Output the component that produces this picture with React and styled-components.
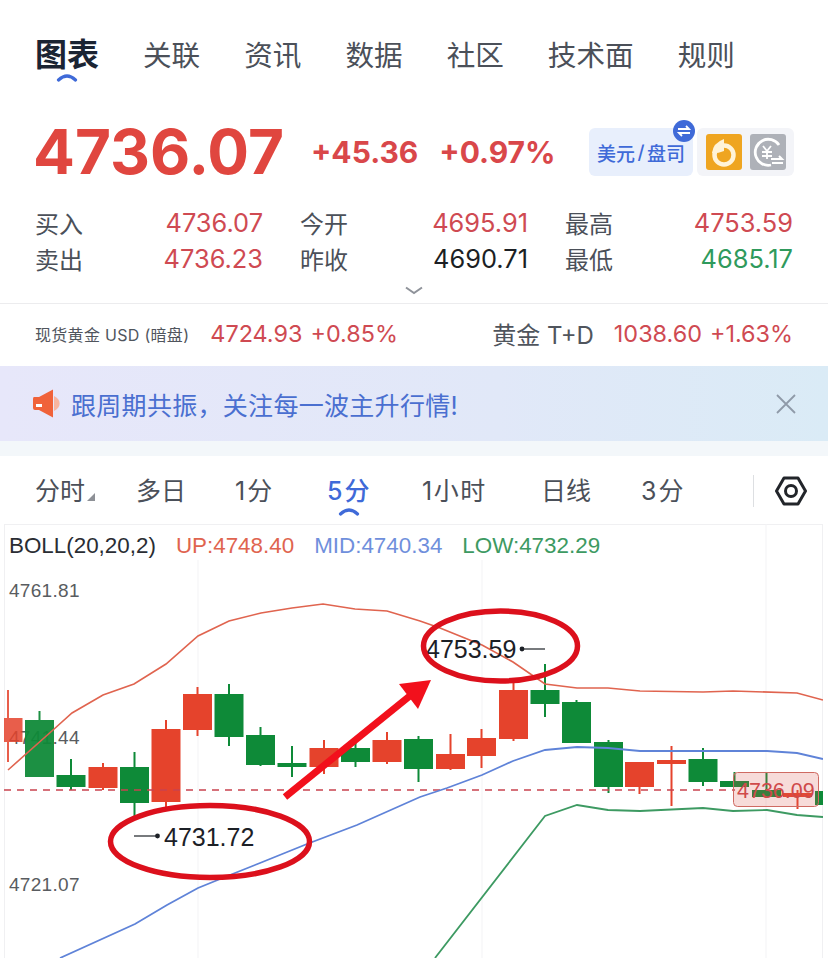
import styled, { createGlobalStyle } from "styled-components";

const BASE = `Inter, "Noto Sans CJK SC", sans-serif`;
const LIB = `"Liberation Sans", "Noto Sans CJK SC", sans-serif`;

const GlobalStyle = createGlobalStyle`
  html, body {
    margin: 0;
    padding: 0;
    background: #fff;
    font-family: ${BASE};
  }
`;

const Page = styled.div`
  width: 828px;
  height: 958px;
  overflow: hidden;
  background: #fff;
`;

const Tabs = styled.div`
  display: flex;
  align-items: baseline;
  gap: 44px;
  height: 49px;
  padding: 35px 0 0 35px;
`;
const Tab = styled.div`
  position: relative;
  font-size: ${(p) => (p.$active ? "32px" : "28.6px")};
  font-weight: ${(p) => (p.$active ? 700 : 400)};
  color: ${(p) => (p.$active ? "#1b2433" : "#4b5059")};
  line-height: 40px;
`;
const Smile = styled.svg`
  position: absolute;
  left: ${(p) => p.$left}px;
  bottom: ${(p) => p.$bottom}px;
`;

const PriceRow = styled.div`
  display: flex;
  align-items: center;
  height: 58px;
  margin-top: 39px;
  padding: 0 34px 0 33px;
`;
const BigPrice = styled.div`
  width: 278px;
  font-size: 62px;
  font-weight: 700;
  color: #e0463f;
  line-height: 58px;
`;
const Change = styled.div`
  font-size: 30px;
  font-weight: 700;
  color: #d9474a;
  margin-right: ${(p) => p.$gap}px;
`;
const CurrencyBtn = styled.div`
  position: relative;
  display: flex;
  align-items: center;
  justify-content: center;
  flex: none;
  width: 104px;
  height: 48px;
  margin-left: auto;
  margin-right: 4px;
  background: #e8effc;
  border-radius: 6px;
  color: #3f6ad8;
  font-size: 19px;
  font-weight: 500;
`;
const Slash = styled.span`
  margin: 0 2.5px;
`;
const SwapBadge = styled.svg`
  position: absolute;
  top: -8px;
  right: -2px;
`;
const ToolBox = styled.div`
  display: flex;
  align-items: center;
  justify-content: center;
  flex: none;
  gap: 8px;
  width: 97px;
  height: 48px;
  background: #f3f4f8;
  border-radius: 6px;
`;
const ToolIcon = styled.div`
  width: 36px;
  height: 36px;
  border-radius: 3px;
  background: ${(p) => p.$bg};
  svg {
    display: block;
  }
`;

const Stats = styled.div`
  display: grid;
  grid-template-columns: repeat(3, 228px);
  column-gap: 37px;
  margin-top: 23px;
  padding-left: 35px;
`;
const Stat = styled.div`
  display: flex;
  justify-content: space-between;
  align-items: center;
  height: 36px;
  font-size: 24px;
  color: #4b5059;
`;
const StatValue = styled.span`
  font-size: 25.4px;
  color: ${(p) => p.$color};
`;
const More = styled.div`
  display: flex;
  justify-content: center;
  height: 28px;
  padding-top: 10px;
  box-sizing: border-box;
  border-bottom: 1px solid #ececee;
`;

const Ticker = styled.div`
  display: flex;
  align-items: center;
  box-sizing: border-box;
  height: 62px;
  padding: 0 35px 3px;
`;
const TickerName = styled.span`
  font-size: ${(p) => p.$size}px;
  letter-spacing: ${(p) => p.$track || 0}px;
  color: #50555d;
  margin-right: ${(p) => p.$gap}px;
`;
const TickerNum = styled.span`
  font-size: 23.4px;
  color: #cf4a52;
  margin-right: ${(p) => p.$gap || 0}px;
`;
const Spacer = styled.div`
  flex: 1;
`;

const Banner = styled.div`
  display: flex;
  align-items: center;
  height: 75px;
  padding: 0 32px 0 33px;
  background: linear-gradient(90deg, #e7e7fa 0%, #e1e8f8 60%, #daebf6 100%);
`;
const BannerText = styled.div`
  flex: 1;
  margin-left: 9px;
  font-size: 25px;
  letter-spacing: 0.3px;
  color: #4a6fd0;
`;
const BannerFoot = styled.div`
  height: 15px;
  background: #f3f7fa;
`;

const Periods = styled.div`
  display: flex;
  align-items: center;
  box-sizing: border-box;
  height: 68px;
  padding: 2px 0 0 35px;
`;
const Period = styled.div`
  position: relative;
  width: ${(p) => p.$w}px;
  font-size: 25px;
  line-height: 34px;
  letter-spacing: ${(p) => p.$track || 0}px;
  color: ${(p) => (p.$active ? "#3f6ad8" : "#4b5059")};
  font-weight: ${(p) => (p.$active ? 500 : 400)};
  white-space: nowrap;
`;
const Corner = styled.i`
  position: absolute;
  left: 52px;
  top: 19px;
  width: 0;
  height: 0;
  border-left: 8px solid transparent;
  border-bottom: 8px solid #8d9096;
`;
const PeriodDivider = styled.div`
  width: 1px;
  height: 32px;
  background: #dddfe2;
  margin-right: 21px;
`;

const ChartBox = styled.div`
  position: relative;
  height: 434px;
  margin: 0 5px 0 4px;
  border-left: 1px solid #f0f0f2;
  border-right: 1px solid #f0f0f2;
  border-top: 1px solid #f0f0f2;
`;
const Legend = styled.div`
  display: flex;
  gap: 20px;
  height: 42px;
  align-items: center;
  padding-left: 4px;
  font-family: ${LIB};
  font-size: 22.4px;
`;
const LegendItem = styled.span`
  color: ${(p) => p.$color};
`;
const Plot = styled.svg`
  position: absolute;
  left: -5px;
  top: -525px;
  width: 828px;
  height: 958px;
  pointer-events: none;
`;

// [center x, body top, body bottom, wick top, wick bottom, up]
const candles = [
  [8, 718, 742, 690, 762, 1],
  [39.5, 720, 777, 711, 777, 0],
  [71, 775, 787, 759, 790, 0],
  [103, 767, 788, 763, 790, 1],
  [134.5, 767, 803, 752, 818, 0],
  [166, 729, 802, 720, 807, 1],
  [197.5, 694, 730, 687, 736, 1],
  [229, 694, 737, 684, 746, 0],
  [260.5, 735, 765, 727, 766, 0],
  [292, 763, 767, 746, 777, 0],
  [324, 748, 767, 740, 774, 1],
  [355.5, 748, 762, 743, 767, 0],
  [387, 740, 762, 732, 764, 1],
  [418.5, 739, 769, 736, 782, 0],
  [450.5, 754, 769, 734, 770, 1],
  [481.5, 738, 756, 729, 768, 1],
  [513.5, 690, 739, 683, 741, 1],
  [545, 690, 704, 664, 717, 0],
  [576.5, 702, 743, 700, 743, 0],
  [608.5, 742, 787, 740, 793, 0],
  [639.5, 762, 787, 762, 794, 1],
  [671.5, 760, 764, 746, 806, 1],
  [703, 759, 782, 748, 786, 0],
  [734.5, 781, 787, 772, 787, 0],
  [766.5, 790, 797, 772, 797, 0],
  [797.5, 793, 797, 790, 809, 1],
  [829.5, 791, 805, 791, 805, 0],
];

const upper = "8,770 53,730 72,713 103,695 134,684 166,664 198,636 229,621 261,613 292,608 323,604 355,609 387,611 420,621 440,628 482,645 513,662 545,684 577,688 608,688 640,691 703,692 733,691 797,693 823,700";
const middle = "60,958 135,924 167,905 198,888 230,875 260,863 307,844 357,825 420,797 447,788 482,775 513,761 545,750 577,747 608,748 640,751 703,751 767,751 797,753 823,759";
const lower = "435,958 545,816 577,805 608,810 640,811 703,808 733,811 767,810 797,815 823,817";

const UP = "#e5432c";
const DOWN = "#0e8a38";

// the two left candles sit over the axis label, which shows through faintly
const candleOpacity = (x) => (x < 20 ? 0.85 : x < 50 ? 0.94 : 1);

const SmileMark = ({ left, bottom }) => (
  <Smile $left={left} $bottom={bottom} width="22" height="9" viewBox="0 0 22 9">
    <path d="M2.5 7 Q11 -1 19.5 7" fill="none" stroke="#3f6ad8" strokeWidth="3.2" strokeLinecap="round" />
  </Smile>
);

const Chart = () => (
  <Plot viewBox="0 0 828 958">
    <defs>
      <clipPath id="plot-clip">
        <rect x="4" y="524" width="819" height="434" />
      </clipPath>
    </defs>
    <g stroke="#f3f3f5" strokeWidth="1">
      <line x1="198" y1="560" x2="198" y2="958" />
      <line x1="482" y1="560" x2="482" y2="958" />
      <line x1="766" y1="524" x2="766" y2="958" />
    </g>
    <g fontFamily="Liberation Sans, sans-serif" fontSize="19" fill="#595c60" letterSpacing=".3">
      <text x="9" y="597">4761.81</text>
      <text x="9" y="744">4741.44</text>
      <text x="9" y="891">4721.07</text>
    </g>
    <g clipPath="url(#plot-clip)">
      {candles.map(([x, top, bottom, wt, wb, up]) => (
        <g key={x} fill={up ? UP : DOWN} opacity={candleOpacity(x)}>
          <rect x={x - 1} y={wt} width="2" height={wb - wt} />
          <rect x={x - 14.5} y={top} width="29" height={bottom - top} />
        </g>
      ))}
      <line x1="4" y1="790" x2="735" y2="790" stroke="#c9434f" strokeWidth="1.6" strokeDasharray="7 6" />
      <polyline points={upper} fill="none" stroke="#e0644f" strokeWidth="1.6" />
      <polyline points={middle} fill="none" stroke="#5f83d8" strokeWidth="1.8" />
      <polyline points={lower} fill="none" stroke="#3d9a62" strokeWidth="1.8" />
      <rect x="733.5" y="772.5" width="85" height="34" rx="4" fill="#dc5a50" fillOpacity=".22" stroke="#cf6a62" />
      <text x="737" y="798" fontFamily="Liberation Sans, sans-serif" fontSize="21.5" fill="#cf4a4a">4736.09</text>
    </g>
    <g fontFamily="Liberation Sans, sans-serif" fontSize="25" fill="#1c2026">
      <text x="164" y="846">4731.72</text>
      <text x="426" y="658">4753.59</text>
    </g>
    <g stroke="#1c2026" strokeWidth="1.2">
      <line x1="134" y1="836" x2="157" y2="836" />
      <line x1="522" y1="649" x2="545" y2="649" />
    </g>
    <circle cx="157.5" cy="836" r="2.4" fill="#1c2026" />
    <circle cx="522" cy="649" r="2.4" fill="#1c2026" />
    <g fill="none" stroke="#dc101c" strokeWidth="5.5">
      <ellipse cx="210" cy="841.5" rx="99.5" ry="36" />
      <ellipse cx="500.5" cy="646" rx="77" ry="35" />
    </g>
    <line x1="285" y1="797" x2="411" y2="695" stroke="#f2101c" strokeWidth="7" />
    <polygon points="431,680 399,684 418,709" fill="#f2101c" />
  </Plot>
);

const stats = [
  ["买入", "4736.07", "#cf4a52"],
  ["今开", "4695.91", "#cf4a52"],
  ["最高", "4753.59", "#cf4a52"],
  ["卖出", "4736.23", "#cf4a52"],
  ["昨收", "4690.71", "#1c1f24"],
  ["最低", "4685.17", "#2f9a5c"],
];

const periods = [
  ["分时", 101],
  ["多日", 99],
  ["1分", 92, 2],
  ["5分", 95, 2],
  ["1小时", 119, 1.5],
  ["日线", 100],
  ["3分", 112, 2],
];

export default function App() {
  return (
    <Page>
      <GlobalStyle />
      <Tabs>
        <Tab $active>
          图表
          <SmileMark left={21} bottom={-7} />
        </Tab>
        <Tab>关联</Tab>
        <Tab>资讯</Tab>
        <Tab>数据</Tab>
        <Tab>社区</Tab>
        <Tab>技术面</Tab>
        <Tab>规则</Tab>
      </Tabs>

      <PriceRow>
        <BigPrice>4736.07</BigPrice>
        <Change $gap={21}>+45.36</Change>
        <Change $gap={0}>+0.97%</Change>
        <CurrencyBtn>
          美元<Slash>/</Slash>盘司
          <SwapBadge width="22" height="22" viewBox="0 0 22 22">
            <circle cx="11" cy="11" r="11" fill="#3f6ad8" />
            <path d="M5 9h11l-3-3M17 13H6l3 3" fill="none" stroke="#fff" strokeWidth="1.8" />
          </SwapBadge>
        </CurrencyBtn>
        <ToolBox>
          <ToolIcon $bg="#efa520">
            <svg width="36" height="36" viewBox="0 0 36 36">
              <circle cx="18" cy="21" r="9.5" fill="none" stroke="#fff3d8" strokeWidth="4.5" />
              <path d="M18 5 L18 17 Q10 20 6 19 Q7 9 18 5Z" fill="#fff3d8" />
            </svg>
          </ToolIcon>
          <ToolIcon $bg="#aeb1b8">
            <svg width="36" height="36" viewBox="0 0 36 36">
              <path d="M29 11A13 13 0 1 0 21 31" fill="none" stroke="#fff" strokeWidth="2.8" />
              <path d="M13 12l4 5 4-5M12 18h10M12 22h10M17 17v8" fill="none" stroke="#fff" strokeWidth="1.8" />
              <path d="M21 25h11l-3-3M33 29H22" fill="none" stroke="#fff" strokeWidth="2" />
            </svg>
          </ToolIcon>
        </ToolBox>
      </PriceRow>

      <Stats>
        {stats.map(([label, value, color]) => (
          <Stat key={label}>
            {label}
            <StatValue $color={color}>{value}</StatValue>
          </Stat>
        ))}
      </Stats>
      <More>
        <svg width="20" height="9" viewBox="0 0 20 9">
          <path d="M2 1.5 L10 7 L18 1.5" fill="none" stroke="#8f939a" strokeWidth="2" />
        </svg>
      </More>

      <Ticker>
        <TickerName $size={16} $gap={21} $track={0.3}>现货黄金 USD (暗盘)</TickerName>
        <TickerNum $gap={8}>4724.93</TickerNum>
        <TickerNum>+0.85%</TickerNum>
        <Spacer />
        <TickerName $size={24} $gap={20}>黄金 T+D</TickerName>
        <TickerNum $gap={8}>1038.60</TickerNum>
        <TickerNum>+1.63%</TickerNum>
      </Ticker>

      <Banner>
        <svg width="29" height="29" viewBox="0 0 29 29">
          <path d="M1 8Q0 8 0 10V19Q0 21 2 21H6L20 28.5V0.5L6 8Z" fill="#f0623a" />
          <path d="M21 7c7.500 3 7.500 12 0 15Z" fill="#f8b5a0" />
          <rect x="3" y="15" width="6" height="3" fill="#fff" />
        </svg>
        <BannerText>{"跟周期共振\uFF0C关注每一波主升行情!"}</BannerText>
        <svg width="20" height="20" viewBox="0 0 20 20">
          <path d="M1 1L19 19M19 1L1 19" stroke="#8f9aa8" strokeWidth="1.8" />
        </svg>
      </Banner>
      <BannerFoot />

      <Periods>
        {periods.map(([name, w, track]) => (
          <Period key={name} $w={w} $track={track} $active={name === "5分"}>
            {name}
            {name === "分时" && <Corner />}
            {name === "5分" && <SmileMark left={11} bottom={-8} />}
          </Period>
        ))}
        <PeriodDivider />
        <svg width="32" height="30" viewBox="0 0 32 30">
          <path d="M9 2H23L30.5 15L23 28H9L1.5 15Z" fill="none" stroke="#22252a" strokeWidth="3" strokeLinejoin="round" />
          <circle cx="16" cy="15" r="5.5" fill="none" stroke="#22252a" strokeWidth="3" />
        </svg>
      </Periods>

      <ChartBox>
        <Legend>
          <LegendItem $color="#2a2d33">BOLL(20,20,2)</LegendItem>
          <LegendItem $color="#e0644f">UP:4748.40</LegendItem>
          <LegendItem $color="#6f8fdc">MID:4740.34</LegendItem>
          <LegendItem $color="#3d9a62">LOW:4732.29</LegendItem>
        </Legend>
        <Chart />
      </ChartBox>
    </Page>
  );
}
